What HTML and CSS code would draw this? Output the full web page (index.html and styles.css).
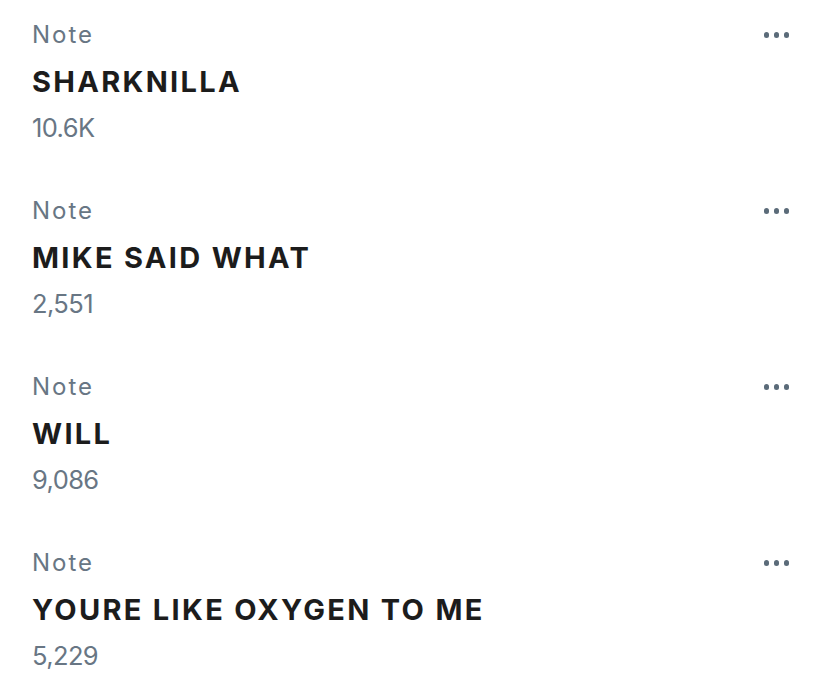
FILE: index.html
```html
<!DOCTYPE html>
<html>
<head>
<meta charset="utf-8">
<link rel="stylesheet" href="styles.css">
</head>
<body>
<ul class="list">
  <li class="item">
    <div class="info">
      <div class="label">Note</div>
      <div class="title">SHARKNILLA</div>
      <div class="count">10.6K</div>
    </div>
    <button class="more" aria-label="More"><span></span><span></span><span></span></button>
  </li>
  <li class="item">
    <div class="info">
      <div class="label">Note</div>
      <div class="title">MIKE SAID WHAT</div>
      <div class="count">2,551</div>
    </div>
    <button class="more" aria-label="More"><span></span><span></span><span></span></button>
  </li>
  <li class="item">
    <div class="info">
      <div class="label">Note</div>
      <div class="title">WILL</div>
      <div class="count">9,086</div>
    </div>
    <button class="more" aria-label="More"><span></span><span></span><span></span></button>
  </li>
  <li class="item">
    <div class="info">
      <div class="label">Note</div>
      <div class="title">YOURE LIKE OXYGEN TO ME</div>
      <div class="count">5,229</div>
    </div>
    <button class="more" aria-label="More"><span></span><span></span><span></span></button>
  </li>
</ul>
</body>
</html>
```
FILE: styles.css
```css
html, body {
  margin: 0;
  padding: 0;
  background: #ffffff;
}
body {
  font-family: Inter, "Noto Sans", sans-serif;
  -webkit-font-smoothing: antialiased;
}
.list {
  list-style: none;
  margin: 0;
  padding: 0;
}
.item {
  height: 176px;
  box-sizing: border-box;
  padding: 20px 39px 0 32px;
  display: flex;
  justify-content: space-between;
  align-items: flex-start;
}
.info {
  display: flex;
  flex-direction: column;
}
.label {
  font-size: 24px;
  line-height: 29px;
  letter-spacing: 2px;
  color: #687684;
}
.title {
  margin-top: 15.5px;
  font-size: 29px;
  line-height: 34px;
  font-weight: 700;
  letter-spacing: 2.3px;
  color: #1c1c1c;
}
.count {
  margin-top: 14px;
  font-size: 25.5px;
  line-height: 30px;
  letter-spacing: -0.6px;
  color: #687684;
}
.more {
  margin-top: 12px;
  border: 0;
  background: none;
  padding: 0;
  display: flex;
  gap: 4.5px;
}
.more span {
  width: 5.5px;
  height: 5.5px;
  border-radius: 50%;
  background: #5b6b79;
}
```
